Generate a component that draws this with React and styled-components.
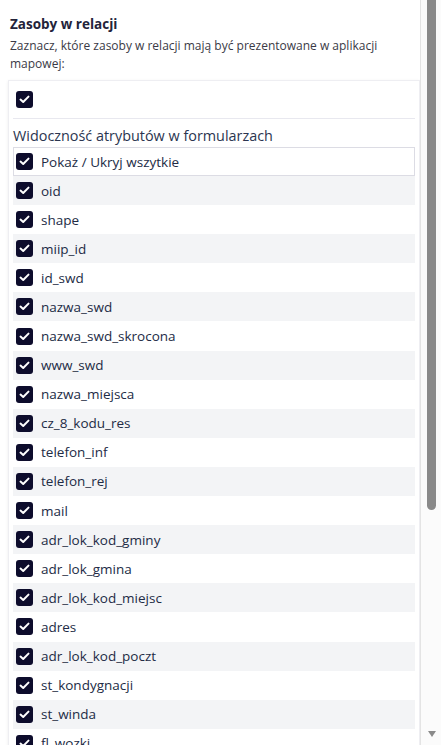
import styled, { createGlobalStyle } from "styled-components";

const GlobalStyle = createGlobalStyle`
  html, body {
    margin: 0;
    padding: 0;
    overflow: hidden;
    background: #ffffff;
  }
  body {
    font-family: "Open Sans", "Noto Sans", "Liberation Sans", sans-serif;
  }
`;

const Page = styled.div`
  display: flex;
  height: 745px;
  overflow: hidden;
`;

const Main = styled.div`
  flex: 1;
  display: flex;
  flex-direction: column;
  padding-left: 8px;
  min-width: 0;
`;

const TopRule = styled.div`
  height: 1px;
  margin: 2px 0 0 -5px;
  background: #e6e6f0;
`;

const Title = styled.h3`
  margin: 12px 0 0 2px;
  font-size: 13.5px;
  line-height: 20px;
  font-weight: 700;
  color: #23233a;
`;

const Description = styled.p`
  margin: 3px 0 0 2px;
  font-size: 12px;
  line-height: 18px;
  color: #3a3a46;
`;

const Card = styled.div`
  margin-top: 7px;
  flex: 1;
  border: 1px solid #eeeef2;
  border-bottom: none;
  box-shadow: 0 1px 3px rgba(0, 0, 0, 0.08);
  padding: 0 4px;
  background: #ffffff;
`;

const MainToggle = styled.div`
  height: 37px;
  display: flex;
  align-items: center;
  padding-left: 3px;
  border-bottom: 1px solid #e8e8ef;
`;

const Label = styled.div`
  margin: 7px 0 1px;
  font-size: 14.4px;
  line-height: 20px;
  color: #2b3550;
`;

const Row = styled.label`
  display: flex;
  align-items: center;
  gap: 8px;
  box-sizing: border-box;
  height: ${(p) => (p.$bordered ? "29px" : "29.1px")};
  padding-left: ${(p) => (p.$bordered ? "2px" : "3px")};
  border: ${(p) => (p.$bordered ? "1px solid #dcdce4" : "none")};
  background: ${(p) => (p.$striped ? "#f3f4f6" : "#ffffff")};
  font-size: 13.5px;
  color: #222b45;
`;

const Box = styled.span`
  width: 17px;
  height: 17px;
  flex: none;
  border-radius: 3px;
  background: #0d0c2c;
  display: inline-flex;
  align-items: center;
  justify-content: center;
`;

const ScrollRail = styled.div`
  width: 21px;
  flex: none;
  display: flex;
  flex-direction: column;
  justify-content: space-between;
  align-items: flex-start;
  background: #fbfbfb;
  border-left: 1px solid #e4e4e4;
  padding-bottom: 8px;
  box-sizing: border-box;
`;

const Thumb = styled.div`
  width: 9px;
  height: 510px;
  margin-left: 6px;
  background: #8a8a8a;
  border-radius: 0 0 5px 5px;
`;

const Arrow = styled.svg`
  margin-left: 7px;
`;

const Check = () => (
  <Box>
    <svg width="11" height="9" viewBox="0 0 11 9">
      <polyline
        points="1.5,4.6 4.2,7 9.5,1.6"
        fill="none"
        stroke="#ffffff"
        strokeWidth="2"
        strokeLinecap="round"
        strokeLinejoin="round"
      />
    </svg>
  </Box>
);

const fields = [
  "oid",
  "shape",
  "miip_id",
  "id_swd",
  "nazwa_swd",
  "nazwa_swd_skrocona",
  "www_swd",
  "nazwa_miejsca",
  "cz_8_kodu_res",
  "telefon_inf",
  "telefon_rej",
  "mail",
  "adr_lok_kod_gminy",
  "adr_lok_gmina",
  "adr_lok_kod_miejsc",
  "adres",
  "adr_lok_kod_poczt",
  "st_kondygnacji",
  "st_winda",
  "fl_wozki",
];

export default function App() {
  return (
    <>
      <GlobalStyle />
      <Page>
        <Main>
          <TopRule />
          <Title>Zasoby w relacji</Title>
          <Description>
            Zaznacz, które zasoby w relacji mają być prezentowane w aplikacji
            mapowej:
          </Description>
          <Card>
            <MainToggle>
              <Check />
            </MainToggle>
            <Label>Widoczność atrybutów w formularzach</Label>
            <Row $bordered>
              <Check />
              Pokaż / Ukryj wszytkie
            </Row>
            {fields.map((name, i) => (
              <Row key={name} $striped={i % 2 === 0}>
                <Check />
                {name}
              </Row>
            ))}
          </Card>
        </Main>
        <ScrollRail>
          <Thumb />
          <Arrow width="8" height="6" viewBox="0 0 8 6">
            <polygon points="0,0 8,0 4,6" fill="#8a8a8a" />
          </Arrow>
        </ScrollRail>
      </Page>
    </>
  );
}
